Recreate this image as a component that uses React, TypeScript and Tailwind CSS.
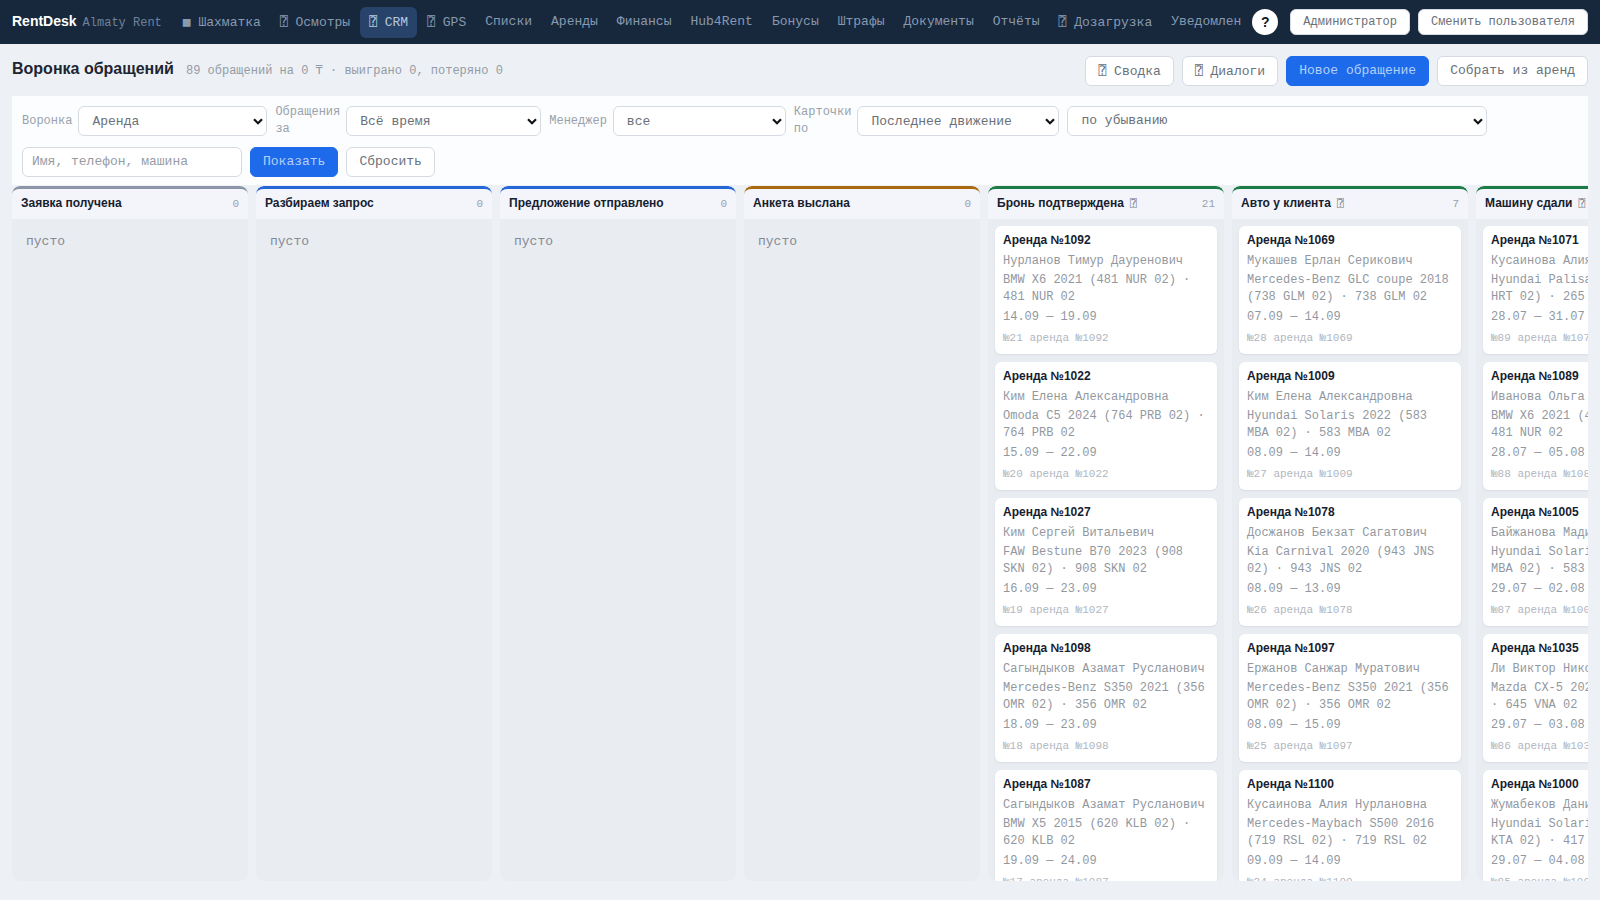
import React from "react";

const MONO = "font-['Liberation_Mono',monospace]";
const SANS = "font-['Liberation_Sans',sans-serif]";

function Mark({ glyph }: { glyph: string }) {
  return <span aria-hidden="true" className="font-['DejaVu_Sans_Mono',monospace]">{glyph}</span>;
}

type NavLink = { label: string; mark?: string; active?: boolean };

const NAV: NavLink[] = [
  { label: "Шахматка", mark: "■" },
  { label: "Осмотры", mark: "⍰" },
  { label: "CRM", mark: "⍰", active: true },
  { label: "GPS", mark: "⍰" },
  { label: "Списки" },
  { label: "Аренды" },
  { label: "Финансы" },
  { label: "Hub4Rent" },
  { label: "Бонусы" },
  { label: "Штрафы" },
  { label: "Документы" },
  { label: "Отчёты" },
  { label: "Дозагрузка", mark: "⍰" },
  { label: "Уведомления" },
];

type Deal = { rent: string; client: string; car: string; dates: string; id: string };
type Stage = { title: string; count: number; bar: string; mark?: boolean; deals: Deal[] };

const STAGES: Stage[] = [
  { title: "Заявка получена", count: 0, bar: "border-[#8b95a7]", deals: [] },
  { title: "Разбираем запрос", count: 0, bar: "border-[#2468d8]", deals: [] },
  { title: "Предложение отправлено", count: 0, bar: "border-[#2468d8]", deals: [] },
  { title: "Анкета выслана", count: 0, bar: "border-[#ab6a10]", deals: [] },
  {
    title: "Бронь подтверждена", count: 21, bar: "border-[#1c7c47]", mark: true,
    deals: [
      { rent: "1092", client: "Нурланов Тимур Дауренович", car: "BMW X6 2021 (481 NUR 02) · 481 NUR 02", dates: "14.09 — 19.09", id: "21" },
      { rent: "1022", client: "Ким Елена Александровна", car: "Omoda C5 2024 (764 PRB 02) · 764 PRB 02", dates: "15.09 — 22.09", id: "20" },
      { rent: "1027", client: "Ким Сергей Витальевич", car: "FAW Bestune B70 2023 (908 SKN 02) · 908 SKN 02", dates: "16.09 — 23.09", id: "19" },
      { rent: "1098", client: "Сагындыков Азамат Русланович", car: "Mercedes-Benz S350 2021 (356 OMR 02) · 356 OMR 02", dates: "18.09 — 23.09", id: "18" },
      { rent: "1087", client: "Сагындыков Азамат Русланович", car: "BMW X5 2015 (620 KLB 02) · 620 KLB 02", dates: "19.09 — 24.09", id: "17" },
    ],
  },
  {
    title: "Авто у клиента", count: 7, bar: "border-[#1c7c47]", mark: true,
    deals: [
      { rent: "1069", client: "Мукашев Ерлан Серикович", car: "Mercedes-Benz GLC coupe 2018 (738 GLM 02) · 738 GLM 02", dates: "07.09 — 14.09", id: "28" },
      { rent: "1009", client: "Ким Елена Александровна", car: "Hyundai Solaris 2022 (583 MBA 02) · 583 MBA 02", dates: "08.09 — 14.09", id: "27" },
      { rent: "1078", client: "Досжанов Бекзат Сагатович", car: "Kia Carnival 2020 (943 JNS 02) · 943 JNS 02", dates: "08.09 — 13.09", id: "26" },
      { rent: "1097", client: "Ержанов Санжар Муратович", car: "Mercedes-Benz S350 2021 (356 OMR 02) · 356 OMR 02", dates: "08.09 — 15.09", id: "25" },
      { rent: "1100", client: "Кусаинова Алия Нурлановна", car: "Mercedes-Maybach S500 2016 (719 RSL 02) · 719 RSL 02", dates: "09.09 — 14.09", id: "24" },
    ],
  },
  {
    title: "Машину сдали", count: 61, bar: "border-[#1c7c47]", mark: true,
    deals: [
      { rent: "1071", client: "Кусаинова Алия Нурлановна", car: "Hyundai Palisade 2023 (265 HRT 02) · 265 HRT 02", dates: "28.07 — 31.07", id: "89" },
      { rent: "1089", client: "Иванова Ольга Петровна", car: "BMW X6 2021 (481 NUR 02) · 481 NUR 02", dates: "28.07 — 05.08", id: "88" },
      { rent: "1005", client: "Байжанова Мадина", car: "Hyundai Solaris 2022 (583 MBA 02) · 583 MBA 02", dates: "29.07 — 02.08", id: "87" },
      { rent: "1035", client: "Ли Виктор Николаевич", car: "Mazda CX-5 2021 (645 VNA 02) · 645 VNA 02", dates: "29.07 — 03.08", id: "86" },
      { rent: "1000", client: "Жумабеков Данияр", car: "Hyundai Solaris 2021 (417 KTA 02) · 417 KTA 02", dates: "29.07 — 04.08", id: "85" },
    ],
  },
];

function TopBar() {
  return (
    <header className="flex h-11 shrink-0 items-center bg-[#17283d] px-3">
      <div className="mr-3 flex shrink-0 items-baseline gap-1.5">
        <span className={`${SANS} text-[14px] leading-5 font-bold text-white`}>RentDesk</span>
        <span className="text-[12px] leading-5 text-[#6f829a]">Almaty Rent</span>
      </div>
      <nav className="mr-2.5 flex min-w-0 flex-1 gap-px overflow-hidden">
        {NAV.map((n) => (
          <a
            key={n.label}
            href="#"
            className={
              n.active
                ? "shrink-0 rounded-md bg-[#274369] px-[9px] text-[13px] leading-[30px] whitespace-pre text-[#b7c8de]"
                : "shrink-0 rounded-md px-[9px] text-[13px] leading-[30px] whitespace-pre text-[#8899b0]"
            }
          >
            {n.mark && <><Mark glyph={n.mark} />{" "}</>}
            {n.label}
          </a>
        ))}
      </nav>
      <button className={`${SANS} mr-3 size-[26px] shrink-0 rounded-full bg-white text-[14px] leading-[24px] font-bold text-[#111a26]`}>?</button>
      <div className="flex shrink-0 gap-2">
        <button className="h-[26px] rounded-md border border-[#d5dbe3] bg-white px-3 text-[12px] leading-[22px] text-[#6a7079]">Администратор</button>
        <button className="h-[26px] rounded-md border border-[#d5dbe3] bg-white px-3 text-[12px] leading-[22px] text-[#6a7079]">Сменить пользователя</button>
      </div>
    </header>
  );
}

function Button({ primary, children }: { primary?: boolean; children: React.ReactNode }) {
  return (
    <button
      className={
        primary
          ? "h-[30px] shrink-0 rounded-md border border-[#1d6bea] bg-[#1d6bea] px-3 text-[13px] leading-[26px] whitespace-pre text-[#b4d0f9]"
          : "h-[30px] shrink-0 rounded-md border border-[#d6dbe2] bg-white px-3 text-[13px] leading-[26px] whitespace-pre text-[#6a7079]"
      }
    >
      {children}
    </button>
  );
}

function Select({ value, width, label }: { value: string; width: string; label?: string }) {
  return (
    <span className="relative flex">
      <select
        aria-label={label}
        className={`${width} h-[30px] appearance-none rounded-md border border-[#d6dbe2] bg-white px-[13px] text-[13px] text-[#6a7079]`}
      >
        <option>{value}</option>
      </select>
      <svg viewBox="0 0 10 7" className="pointer-events-none absolute top-[12px] right-1 h-[7px] w-[10px]" fill="none">
        <path d="M1 1.2 L5 5.2 L9 1.2" stroke="#101418" strokeWidth="2.2" />
      </svg>
    </span>
  );
}

function Filter({ label, value, width }: { label: string; value: string; width: string }) {
  return (
    <label className="flex items-center gap-1.5 text-[12px] leading-[17px] text-[#9aa1ab]">
      <span className="w-min">{label}</span>
      <Select value={value} width={width} />
    </label>
  );
}

function DealCard({ deal }: { deal: Deal }) {
  return (
    <article className="shrink-0 rounded-md bg-white px-2 pt-1.5 pb-[7px] text-[12px] leading-[17px] text-[#92989f] shadow-[0_1px_2px_rgba(20,35,60,0.08)]">
      <h3 className={`${SANS} text-[12px] leading-4 font-bold text-[#17202e]`}>Аренда №{deal.rent}</h3>
      <p className="mt-[5px]">{deal.client}</p>
      <p className="mt-0.5">{deal.car}</p>
      <p className="mt-[3px]">{deal.dates}</p>
      <p className="mt-1 text-[11px] text-[#b1b6be]">№{deal.id} аренда №{deal.rent}</p>
    </article>
  );
}

function StageColumn({ stage }: { stage: Stage }) {
  return (
    <section className="flex w-[236px] shrink-0 flex-col overflow-hidden rounded-lg bg-[#e9ecf1]">
      <div className="bg-[#edf1f5]">
        <div className={`${stage.bar} flex h-[33px] items-center justify-between rounded-t-lg border-t-3 bg-[#f3f5fa] px-[9px]`}>
          <h2 className={`${SANS} pb-0.5 text-[12px] leading-4 font-bold whitespace-pre text-[#17202e]`}>
            {stage.title}
            {stage.mark && <span className="text-[11px] font-normal text-[#7d8591]">{"  "}<Mark glyph="⍰" /></span>}
          </h2>
          <span className="text-[11px] leading-4 text-[#9aa1ab]">{stage.count}</span>
        </div>
      </div>
      {stage.deals.length === 0 ? (
        <p className="px-3.5 pt-[13px] text-[13px] leading-[19px] text-[#858b95]">пусто</p>
      ) : (
        <div className="flex min-h-0 flex-1 flex-col gap-2 overflow-hidden px-[7px] pt-[7px]">
          {stage.deals.map((d) => <DealCard key={d.rent} deal={d} />)}
        </div>
      )}
    </section>
  );
}

export default function App() {
  return (
    <div className={`${MONO} flex h-screen flex-col overflow-hidden bg-[#edf1f5]`}>
      <TopBar />
      <main className="flex min-h-0 flex-1 flex-col px-3 pt-3 pb-[19px]">
        <div className="flex shrink-0 items-center gap-2">
          <div className="mr-auto flex items-baseline gap-3 pb-1">
            <h1 className={`${SANS} text-[16px] leading-6 font-bold text-[#1d2532]`}>Воронка обращений</h1>
            <p className="text-[12px] text-[#949ba6]">89 обращений на 0 ₸ · выиграно 0, потеряно 0</p>
          </div>
          <Button><Mark glyph="⍰" /> Сводка</Button>
          <Button><Mark glyph="⍰" /> Диалоги</Button>
          <Button primary>Новое обращение</Button>
          <Button>Собрать из аренд</Button>
        </div>
        <form className="mt-2.5 flex shrink-0 flex-wrap items-center gap-x-2 gap-y-[9px] bg-[#fbfdfe] px-2.5 py-2">
          <Filter label="Воронка" value="Аренда" width="w-[189px]" />
          <Filter label="Обращения за" value="Всё время" width="w-[195px]" />
          <Filter label="Менеджер" value="все" width="w-[173px]" />
          <Filter label="Карточки по" value="Последнее движение" width="w-[202px]" />
          <Select label="Порядок" value="по убыванию" width="w-[420px]" />
          <div className="flex w-full gap-2">
            <input
              type="text"
              aria-label="Поиск"
              placeholder="Имя, телефон, машина"
              className="h-[30px] w-[220px] rounded-md border border-[#d6dbe2] bg-white px-[9px] pb-0.5 text-[13px] text-[#6a7079] placeholder:text-[#979ca4]"
            />
            <Button primary>Показать</Button>
            <Button>Сбросить</Button>
          </div>
        </form>
        <div className="mt-px flex min-h-0 flex-1 gap-2 overflow-hidden">
          {STAGES.map((s) => <StageColumn key={s.title} stage={s} />)}
        </div>
      </main>
    </div>
  );
}
